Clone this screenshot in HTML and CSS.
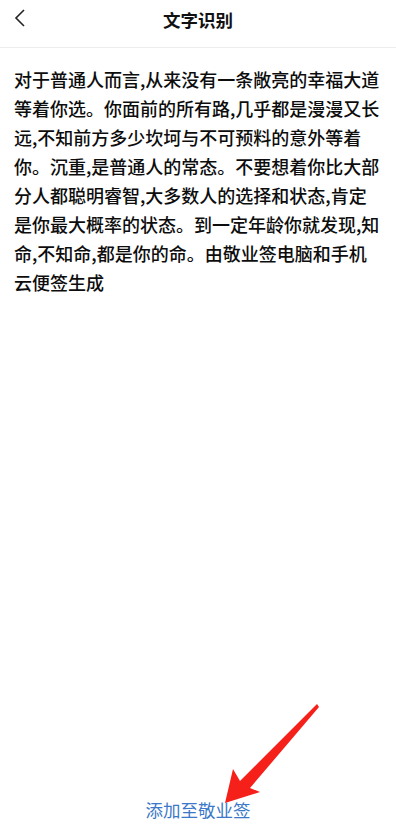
FILE: index.html
```html
<!DOCTYPE html>
<html lang="zh-CN">
<head>
<meta charset="utf-8">
<title>文字识别</title>
<link rel="stylesheet" href="styles.css">
</head>
<body>
<div class="page">
  <header class="topbar">
    <span class="back">
      <svg width="12" height="18" viewBox="0 0 12 18"><path d="M10 1 L2 9 L10 17" fill="none" stroke="#222" stroke-width="1.6"/></svg>
    </span>
    <h1 class="title">文字识别</h1>
  </header>
  <main class="content">
    <p class="text">对于普通人而言,从来没有一条敞亮的幸福大道等着你选。你面前的所有路,几乎都是漫漫又长远,不知前方多少坎坷与不可预料的意外等着你。沉重,是普通人的常态。不要想着你比大部分人都聪明睿智,大多数人的选择和状态,肯定是你最大概率的状态。到一定年龄你就发现,知命,不知命,都是你的命。由敬业签电脑和手机云便签生成</p>
  </main>
  <footer class="footer">
    <a class="add">添加至敬业签</a>
  </footer>
  <svg class="arrow" width="396" height="836" viewBox="0 0 396 836">
    <polygon points="317,704 240,781 233,769 225,803 260,792 250,788 319,707" fill="#f5201a"/>
  </svg>
</div>
</body>
</html>
```

FILE: styles.css
```css
html, body {
  margin: 0;
  padding: 0;
  background: #fff;
}
body {
  font-family: "Noto Sans CJK SC", "Noto Sans", sans-serif;
  color: #111;
}
.page {
  position: relative;
  width: 396px;
  height: 836px;
  display: flex;
  flex-direction: column;
  overflow: hidden;
}
.topbar {
  height: 48px;
  border-bottom: 1px solid #ececec;
  display: flex;
  align-items: center;
  justify-content: center;
  position: relative;
  box-sizing: border-box;
  padding-bottom: 8px;
}
.back {
  position: absolute;
  left: 14px;
  top: 9px;
  display: flex;
}
.title {
  margin: 0;
  font-size: 17.5px;
  font-weight: 700;
  color: #111;
  line-height: 24px;
}
.content {
  flex: 1;
  padding: 17px 14px 0 14px;
}
.text {
  margin: 0;
  font-size: 18px;
  line-height: 29px;
  color: #0d0d0d;
  font-weight: 500;
}
.footer {
  height: 52px;
  display: flex;
  justify-content: center;
  align-items: flex-start;
  box-sizing: border-box;
  padding-top: 14px;
}
.add {
  font-size: 17.5px;
  line-height: 24px;
  color: #3b78c8;
}
.arrow {
  position: absolute;
  left: 0;
  top: 0;
  pointer-events: none;
}
```
